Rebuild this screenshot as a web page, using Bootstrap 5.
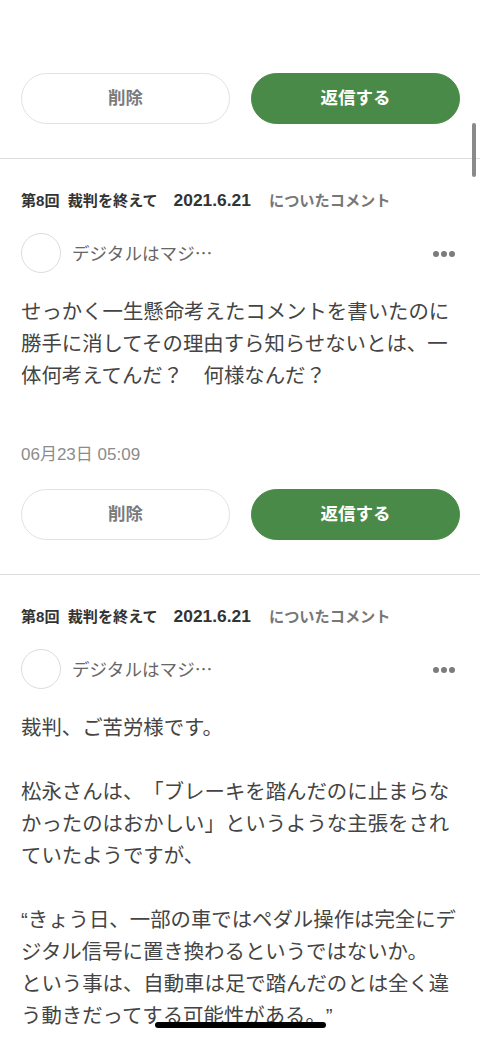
<!DOCTYPE html>
<html lang="ja">
<head>
<meta charset="utf-8">
<link href="https://cdn.jsdelivr.net/npm/bootstrap@5.3.0/dist/css/bootstrap.min.css" rel="stylesheet">
<style>
html,body{height:1039px;overflow:hidden;background:#fff}
body{font-family:"Liberation Sans","Noto Sans CJK JP",sans-serif;color:#333;position:relative;text-spacing-trim:space-all}
.action-row{gap:21px;padding:0 20px 0 21px}
.pill{flex:1 1 0;height:51px;border-radius:26px;font-size:17.5px;font-weight:700;line-height:1;padding:1px 0 0;display:flex;align-items:center;justify-content:center}
.pill-ghost{background:#fff;border:1.5px solid #e2e2e2;color:#7b7b7b}
.pill-green{background:#4a8a48;border:1px solid #4a8a48;color:#fff}
.top-block{padding-top:73px;padding-bottom:34px}
.item{border-top:1px solid #dedede;padding-top:32px;padding-bottom:34px}
.head-line{padding:0 21px;font-size:15.1px;line-height:18px;height:18px;white-space:nowrap}
.head-line b{color:#333;font-weight:700}
.head-line .first-part{word-spacing:4px}
.head-line .num{font-size:17.4px;margin-left:16px}
.head-line span.muted-tail{color:#777;font-weight:700;font-size:15.2px;margin-left:18px}
.author{padding:0 21px;margin-top:24px;height:40px}
.ava{width:40px;height:40px;border:1px solid #dcdcdc;border-radius:50%;flex:none}
.author-name{font-family:"Noto Sans CJK JP",sans-serif;font-size:17.6px;color:#666;margin-left:11px;white-space:nowrap}
.dots{gap:2px;margin-right:4px;padding-top:2px}
.dots i{display:block;width:6px;height:6px;border-radius:50%;background:#7c7c7c}
.body-text{padding:0 21px;margin:23px 0 0;font-size:20.4px;line-height:32px;color:#444;white-space:nowrap}
.stamp{padding:0 21px;margin-top:53px;font-size:17px;line-height:20px;color:#8c8c8c}
.item .action-row{margin-top:24px}
.scroll-thumb{position:absolute;left:472px;top:123px;width:4px;height:54px;border-radius:2px;background:#8a8a8a}
.home-bar{position:absolute;left:155px;top:1022px;width:171px;height:6px;border-radius:3px;background:#000}
</style>
</head>
<body>
<div class="top-block">
  <div class="d-flex action-row">
    <button type="button" class="btn pill pill-ghost">削除</button>
    <button type="button" class="btn pill pill-green">返信する</button>
  </div>
</div>

<section class="item">
  <div class="head-line"><b class="first-part">第8回 裁判を終えて</b><b class="num">2021.6.21</b><span class="muted-tail">についたコメント</span></div>
  <div class="d-flex align-items-center author">
    <div class="ava"></div>
    <div class="author-name flex-grow-1">デジタルはマジ…</div>
    <div class="d-flex dots"><i></i><i></i><i></i></div>
  </div>
  <p class="body-text">せっかく一生懸命考えたコメントを書いたのに<br>勝手に消してその理由すら知らせないとは、一<br>体何考えてんだ？　何様なんだ？</p>
  <div class="stamp">06月23日 05:09</div>
  <div class="d-flex action-row">
    <button type="button" class="btn pill pill-ghost">削除</button>
    <button type="button" class="btn pill pill-green">返信する</button>
  </div>
</section>

<section class="item">
  <div class="head-line"><b class="first-part">第8回 裁判を終えて</b><b class="num">2021.6.21</b><span class="muted-tail">についたコメント</span></div>
  <div class="d-flex align-items-center author">
    <div class="ava"></div>
    <div class="author-name flex-grow-1">デジタルはマジ…</div>
    <div class="d-flex dots"><i></i><i></i><i></i></div>
  </div>
  <p class="body-text">裁判、ご苦労様です。<br><br>松永さんは、「ブレーキを踏んだのに止まらな<br>かったのはおかしい」というような主張をされ<br>ていたようですが、<br><br>“きょう日、一部の車ではペダル操作は完全にデ<br>ジタル信号に置き換わるというではないか。<br>という事は、自動車は足で踏んだのとは全く違<br>う動きだってする可能性がある。”</p>
</section>

<div class="scroll-thumb"></div>
<div class="home-bar"></div>
<script src="https://cdn.jsdelivr.net/npm/bootstrap@5.3.0/dist/js/bootstrap.bundle.min.js"></script>
</body>
</html>
